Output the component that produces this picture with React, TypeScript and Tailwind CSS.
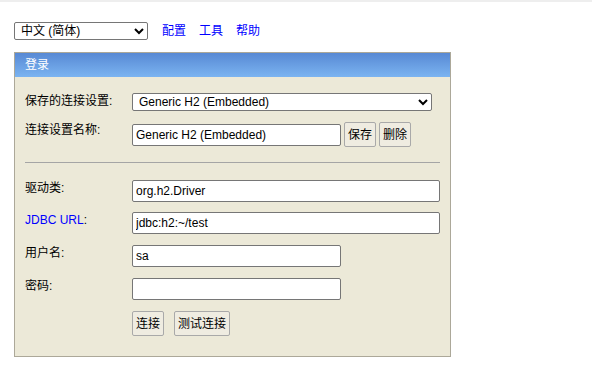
import React from "react";

const inputCls =
  "h-[22px] border border-[#767676] rounded-[2px] bg-white px-[3px] text-[12px] text-black outline-none";
const btnCls =
  "h-[25px] border border-[#a9a9a9] rounded-[2px] bg-[#efece1] text-[12px] text-black flex items-center justify-center";

function Row({
  label,
  children,
  className = "",
}: {
  label: React.ReactNode;
  children: React.ReactNode;
  className?: string;
}) {
  return (
    <div className={"flex items-start " + className}>
      <div className="w-[107px] leading-[16px] shrink-0">{label}</div>
      <div className="flex items-center">{children}</div>
    </div>
  );
}

export default function App() {
  return (
    <div className="w-[592px] h-[389px] bg-white text-[12px] text-black font-['Liberation_Sans','Noto_Sans_CJK_SC',sans-serif]">
      <div className="h-[2px] bg-[#eeeeee]" />
      <div className="pl-[14px] pt-[20px] flex items-center">
        <select
          className="w-[134px] h-[18px] border border-[#767676] rounded-[2px] bg-white text-[12px] pl-[2px] text-black"
          defaultValue="zh_CN"
        >
          <option value="zh_CN">中文 (简体)</option>
        </select>
        <div className="ml-[14px] flex gap-[13px] text-[#0000ff] leading-[16px]">
          <span>配置</span>
          <span>工具</span>
          <span>帮助</span>
        </div>
      </div>

      <div className="ml-[14px] mt-[12px] w-[437px] border border-[#aca899] bg-[#ece9d8]">
        <div className="h-[24px] bg-gradient-to-b from-[#5889d4] to-[#7bb4f1] text-white flex items-center pl-[10px]">
          登录
        </div>
        <div className="pl-[10px] pr-[9px] pt-[16px] pb-[20px]">
          <Row label="保存的连接设置:">
            <select
              className="w-[300px] h-[18px] border border-[#767676] rounded-[2px] bg-white text-[12px] pl-[2px] text-black"
              defaultValue="h2"
            >
              <option value="h2">Generic H2 (Embedded)</option>
            </select>
          </Row>
          <Row label="连接设置名称:" className="mt-[11px]">
            <input
              className={inputCls + " w-[209px]"}
              defaultValue="Generic H2 (Embedded)"
            />
            <button className={btnCls + " w-[32px] ml-[3px]"}>保存</button>
            <button className={btnCls + " w-[32px] ml-[3px]"}>删除</button>
          </Row>
          <div className="mt-[15px] h-px bg-[#a5a5a5] w-[415px]" />
          <Row label="驱动类:" className="mt-[17px]">
            <input className={inputCls + " w-[308px]"} defaultValue="org.h2.Driver" />
          </Row>
          <Row
            label={
              <span>
                <span className="text-[#0000ff]">JDBC URL</span>:
              </span>
            }
            className="mt-[10px]"
          >
            <input className={inputCls + " w-[308px]"} defaultValue="jdbc:h2:~/test" />
          </Row>
          <Row label="用户名:" className="mt-[11px]">
            <input className={inputCls + " w-[209px]"} defaultValue="sa" />
          </Row>
          <Row label="密码:" className="mt-[11px]">
            <input type="password" className={inputCls + " w-[209px]"} defaultValue="" />
          </Row>
          <Row label="" className="mt-[11px]">
            <button className={btnCls + " w-[32px]"}>连接</button>
            <button className={btnCls + " w-[56px] ml-[10px]"}>测试连接</button>
          </Row>
        </div>
      </div>
    </div>
  );
}
